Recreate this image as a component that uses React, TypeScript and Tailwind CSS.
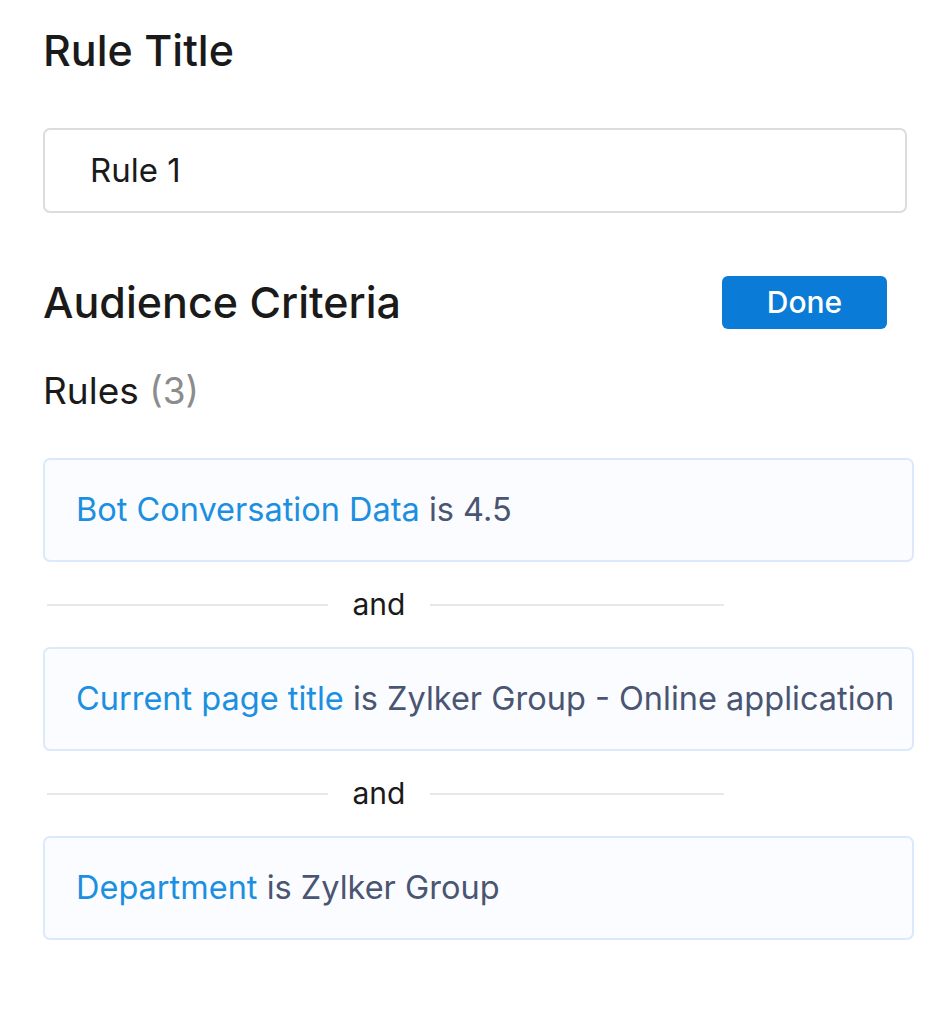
export default function App() {
  const rules = [
    { field: "Bot Conversation Data", value: "4.5" },
    { field: "Current page title", value: "Zylker Group - Online application" },
    { field: "Department", value: "Zylker Group" },
  ];
  return (
    <div className="min-h-[1030px] w-[950px] bg-white font-['Inter',sans-serif] text-[#1a1a1a]">
      <div className="pl-[43px] pr-[36px] pt-[22px]">
        <h2 className="text-[43px] leading-[56px] font-medium">Rule Title</h2>
        <div className="mt-[50px] flex h-[85px] w-[864px] items-center rounded-[7px] border-2 border-[#dcdcdc] px-[45px] text-[33px]">
          Rule 1
        </div>

        <div className="mt-[61px] flex w-[844px] items-center justify-between">
          <h2 className="text-[43px] leading-[56px] font-medium">Audience Criteria</h2>
          <button className="h-[53px] w-[165px] rounded-[6px] bg-[#0a7bd6] text-[30px] font-medium text-white">
            Done
          </button>
        </div>

        <div className="mt-[39px] text-[37px] leading-[44px]">
          Rules <span className="text-[#8c8c8c]">(3)</span>
        </div>

        <div className="mt-[45px] flex flex-col">
          {rules.map((r, i) => (
            <div key={r.field}>
              {i > 0 && (
                <div className="ml-[4px] flex h-[85px] items-center">
                  <div className="h-[2px] w-[281px] bg-[#e6e8ec]" />
                  <span className="w-[102px] text-center text-[30px]">and</span>
                  <div className="h-[2px] w-[294px] bg-[#e6e8ec]" />
                </div>
              )}
              <div className="flex h-[104px] w-[871px] items-center rounded-[7px] border-2 border-[#dce9fa] bg-[#fafcff] px-[31px] text-[32.5px] whitespace-nowrap">
                <span className="text-[#1c8fe0]">{r.field}</span>
                <span className="text-[#4a5572]">&nbsp;is {r.value}</span>
              </div>
            </div>
          ))}
        </div>
      </div>
    </div>
  );
}
